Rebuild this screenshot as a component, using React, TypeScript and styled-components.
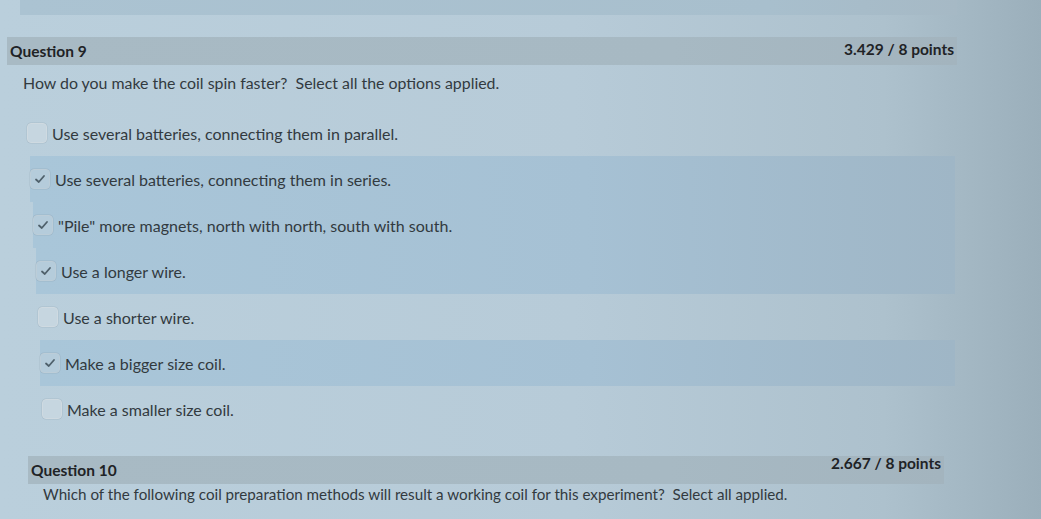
import React from "react";
import styled, { createGlobalStyle } from "styled-components";

const Global = createGlobalStyle`
  html, body { margin: 0; padding: 0; }
  body { font-family: Lato, "Open Sans", "Liberation Sans", sans-serif; }
`;

const Page = styled.div`
  width: 1041px;
  height: 519px;
  overflow: hidden;
  box-sizing: border-box;
  background: linear-gradient(90deg, #bacfdc 0%, #b7cbd8 55%, #adc1cd 85%, #9bafbb 100%);
  color: #2b3236;
`;

const TopStrip = styled.div`
  margin-left: 20px;
  width: 937px;
  height: 15px;
  background: linear-gradient(90deg, #abc3d2 0%, #a8bfcd 80%, #a6b9c5 100%);
`;

const Section = styled.section<{ $indent: number; $top: number }>`
  margin-top: ${(p) => p.$top}px;
  padding-left: ${(p) => p.$indent}px;
`;

const Header = styled.div<{ $width: number }>`
  width: ${(p) => p.$width}px;
  height: 28px;
  box-sizing: border-box;
  padding: 0 3px;
  display: flex;
  align-items: center;
  justify-content: space-between;
  background: linear-gradient(90deg, #a8bac4 0%, #a7b9c3 70%, #a3b4be 100%);
`;

const Title = styled.span`
  font-size: 15.5px;
  font-weight: 700;
  color: #1f2326;
`;

const Points = styled.span<{ $lift: number }>`
  font-size: 15.5px;
  font-weight: 700;
  color: #1f2326;
  transform: translateY(${(p) => -p.$lift}px);
`;

const Prompt = styled.p<{ $indent: number; $size: number; $top: number }>`
  margin: ${(p) => p.$top}px 0 0;
  padding-left: ${(p) => p.$indent}px;
  font-size: ${(p) => p.$size}px;
  line-height: 20px;
  color: #323a3f;
  white-space: nowrap;
`;

const OptionList = styled.ul`
  list-style: none;
  margin: 17px 0 0;
  padding: 0;
  width: 955px;
`;

const OptionRow = styled.li<{ $checked: boolean; $shift: number }>`
  height: 46px;
  display: flex;
  align-items: center;
  gap: 5px;
  margin-left: ${(p) => 27 + p.$shift}px;
  background: ${(p) =>
    p.$checked
      ? "linear-gradient(90deg, #a9c6d9 0%, #a6c1d4 60%, #9fb6c6 100%)"
      : "transparent"};
  font-size: 16px;
  color: #323a3f;
  white-space: nowrap;
`;

const Box = styled.span<{ $checked: boolean }>`
  width: 20px;
  height: 20px;
  box-sizing: border-box;
  border: 1px solid ${(p) => (p.$checked ? "#bccdd8" : "#cfdae1")};
  border-radius: 4px;
  background: ${(p) => (p.$checked ? "#b5ccdb" : "#c6d6e0")};
  box-shadow: 0 0 0 0.5px rgba(120, 140, 155, 0.25);
  display: flex;
  align-items: center;
  justify-content: center;
  flex: none;
`;

const options = [
  { text: "Use several batteries, connecting them in parallel.", checked: false },
  { text: "Use several batteries, connecting them in series.", checked: true },
  { text: "\"Pile\" more magnets, north with north, south with south.", checked: true },
  { text: "Use a longer wire.", checked: true },
  { text: "Use a shorter wire.", checked: false },
  { text: "Make a bigger size coil.", checked: true },
  { text: "Make a smaller size coil.", checked: false },
];

const shifts = [0, 3, 6, 9, 11, 13, 15];

const Check = () => (
  <svg width="12" height="12" viewBox="0 0 12 12">
    <polyline
      points="2,6.5 4.8,9 10,3"
      fill="none"
      stroke="#4f606b"
      strokeWidth="1.8"
      strokeLinecap="round"
      strokeLinejoin="round"
    />
  </svg>
);

export default function App() {
  return (
    <Page>
      <Global />
      <TopStrip />
      <Section $indent={7} $top={22}>
        <Header $width={950}>
          <Title>Question 9</Title>
          <Points $lift={2}>3.429 / 8 points</Points>
        </Header>
      </Section>
      <Prompt $indent={23} $size={15.9} $top={8}>
        How do you make the coil spin faster?&nbsp; Select all the options applied.
      </Prompt>
      <OptionList>
        {options.map((o, i) => (
          <OptionRow key={i} $checked={o.checked} $shift={shifts[i]}>
            <Box $checked={o.checked}>{o.checked && <Check />}</Box>
            {o.text}
          </OptionRow>
        ))}
      </OptionList>
      <Section $indent={28} $top={24}>
        <Header $width={916}>
          <Title>Question 10</Title>
          <Points $lift={7}>2.667 / 8 points</Points>
        </Header>
      </Section>
      <Prompt $indent={43} $size={15.2} $top={0}>
        Which of the following coil preparation methods will result a working coil for this experiment?&nbsp; Select all applied.
      </Prompt>
    </Page>
  );
}
